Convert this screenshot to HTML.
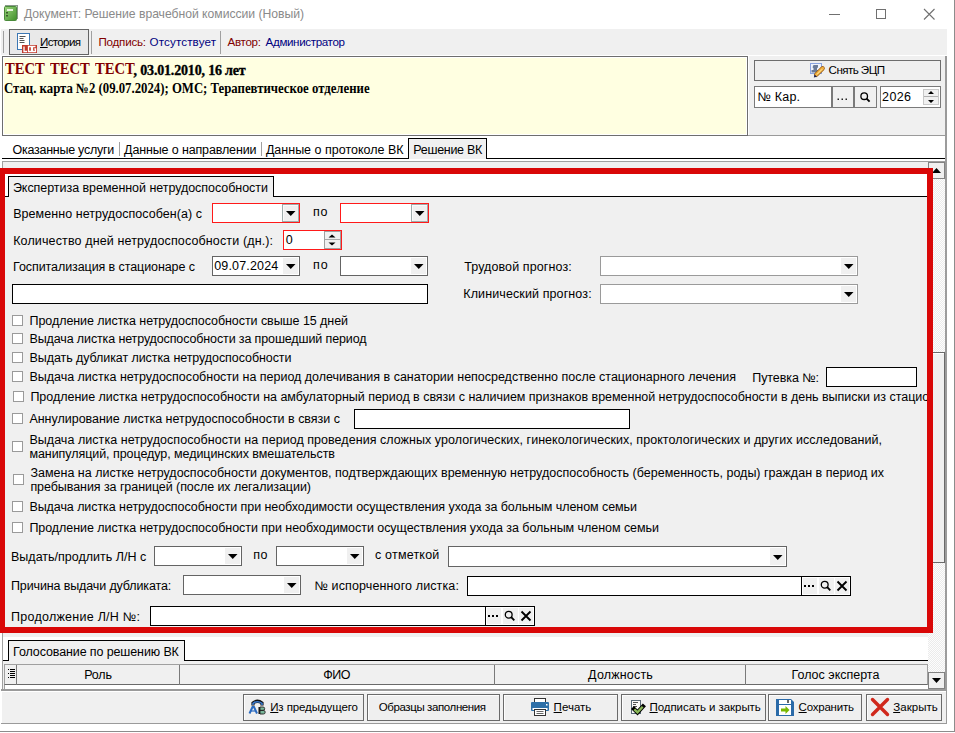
<!DOCTYPE html>
<html><head><meta charset="utf-8"><style>
html,body{margin:0;padding:0;width:955px;height:733px;overflow:hidden;background:#fff;}
.a{position:absolute;box-sizing:border-box;}
.t{white-space:nowrap;line-height:1;font-family:"Liberation Sans",sans-serif;}
u{text-decoration:underline;text-underline-offset:1px;}
</style></head><body>
<div class="a" style="left:0px;top:0px;width:955px;height:733px;background:#ffffff;"></div>
<div class="a" style="left:954px;top:0px;width:1px;height:732px;background:#8c8c8c;"></div>
<div class="a" style="left:0px;top:731px;width:955px;height:1px;background:#8c8c8c;"></div>
<div class="a" style="left:1px;top:29px;width:946px;height:26px;background:#f0f0f0;"></div>
<div class="a" style="left:748px;top:56px;width:199px;height:80px;background:#f0f0f0;"></div>
<div class="a" style="left:2px;top:161px;width:945px;height:563px;background:#f0f0f0;"></div>
<svg class="a" style="left:3px;top:4px" width="16" height="18" viewBox="0 0 16 18"><defs><linearGradient id="gb" x1="0" y1="0" x2="1" y2="1"><stop offset="0" stop-color="#9ed67e"/><stop offset="1" stop-color="#3f8f2a"/></linearGradient></defs><rect x="2.5" y="1.5" width="12" height="13" fill="#e8ece8" stroke="#8a9a8a"/><rect x="1.5" y="2.5" width="12" height="14" rx="1" fill="url(#gb)" stroke="#4a8a3a"/><rect x="4" y="5" width="6" height="2" fill="#e8f6e0"/><rect x="3" y="8" width="2" height="1.5" fill="#3a5a2a"/><rect x="3" y="11" width="2" height="1.5" fill="#3a5a2a"/></svg>
<div class="a t" style="left:24px;top:8px;font-size:12.2px;color:#8a8a8a;font-weight:normal;font-family:'Liberation Sans', sans-serif;letter-spacing:-0.029px;">Документ: Решение врачебной комиссии (Новый)</div>
<div class="a" style="left:829px;top:14px;width:11px;height:1px;background:#707070;"></div>
<div class="a" style="left:876px;top:9px;width:10px;height:10px;box-shadow:inset 0 0 0 1px #707070;"></div>
<svg class="a" style="left:923px;top:8px" width="13" height="13" viewBox="0 0 13 13"><path d="M1 1 L11.5 11.5 M11.5 1 L1 11.5" stroke="#707070" stroke-width="1.1"/></svg>
<div class="a" style="left:3px;top:31px;width:1px;height:22px;background:#a0a0a0;"></div>
<div class="a" style="left:9px;top:29px;width:80px;height:26px;background:#e9e9e9;box-shadow:inset 0 0 0 1px #646464;"></div>
<svg class="a" style="left:16px;top:32px" width="22" height="22" viewBox="0 0 22 22"><rect x="1.5" y="1.5" width="12" height="16" fill="#fff" stroke="#3c78b4"/><path d="M3.5 4.5h6M3.5 6.5h4M3.5 8.5h5M3.5 10.5h5" stroke="#555" stroke-width="1"/><rect x="6" y="13" width="15" height="8" fill="#c0392b"/><path d="M8 14.5v5h3M12.5 14.5h3v5h-3zM19.5 14.5h-3v5h3v-2.5h-1.2" fill="none" stroke="#fff" stroke-width="1.3"/></svg>
<div class="a t" style="left:40px;top:36px;font-size:11.6px;color:#000;font-weight:normal;font-family:'Liberation Sans', sans-serif;letter-spacing:-0.664px;"><u>И</u>стория</div>
<div class="a" style="left:91px;top:31px;width:1px;height:23px;background:#a0a0a0;"></div>
<div class="a t" style="left:98.5px;top:36px;font-size:11.6px;color:#800000;font-weight:normal;font-family:'Liberation Sans', sans-serif;letter-spacing:-0.230px;">Подпись:</div>
<div class="a t" style="left:149.5px;top:36px;font-size:11.6px;color:#000080;font-weight:normal;font-family:'Liberation Sans', sans-serif;letter-spacing:0.147px;">Отсутствует</div>
<div class="a" style="left:220px;top:31px;width:1px;height:23px;background:#a0a0a0;"></div>
<div class="a t" style="left:227.5px;top:36px;font-size:11.6px;color:#800000;font-weight:normal;font-family:'Liberation Sans', sans-serif;letter-spacing:-0.287px;">Автор:</div>
<div class="a t" style="left:265.6px;top:36px;font-size:11.6px;color:#000080;font-weight:normal;font-family:'Liberation Sans', sans-serif;letter-spacing:-0.355px;">Администратор</div>
<div class="a" style="left:2px;top:56px;width:746px;height:80px;background:#ffffe1;box-shadow:inset 0 0 0 1px #6e6e6e;box-shadow:inset 0 0 0 1px #6e6e6e, inset 0 0 0 2px #ffffff;"></div>
<div class="a t" style="left:5px;top:61px;font-size:16px;color:#800000;font-weight:bold;font-family:'Liberation Serif', serif;letter-spacing:0.000px;transform:scaleX(0.915);transform-origin:0 0;">ТЕСТ</div>
<div class="a t" style="left:49.9px;top:61px;font-size:16px;color:#800000;font-weight:bold;font-family:'Liberation Serif', serif;letter-spacing:0.000px;transform:scaleX(0.915);transform-origin:0 0;">ТЕСТ</div>
<div class="a t" style="left:94.6px;top:61px;font-size:16px;color:#800000;font-weight:bold;font-family:'Liberation Serif', serif;letter-spacing:0.000px;transform:scaleX(0.915);transform-origin:0 0;">ТЕСТ</div>
<div class="a t" style="left:133.6px;top:64px;font-size:14px;color:#000;font-weight:bold;font-family:'Liberation Serif', serif;letter-spacing:-0.176px;-webkit-text-stroke:0.35px #000;">, 03.01.2010, 16 лет</div>
<div class="a t" style="left:4px;top:82px;font-size:14px;color:#000;font-weight:bold;font-family:'Liberation Serif', serif;letter-spacing:0.000px;transform:scaleX(0.912);transform-origin:0 0;">Стац. карта №2 (09.07.2024); ОМС; Терапевтическое отделение</div>
<div class="a" style="left:748px;top:55px;width:199px;height:1px;background:#ffffff;"></div>
<div class="a" style="left:748px;top:55px;width:1px;height:81px;background:#ffffff;"></div>
<div class="a" style="left:945px;top:56px;width:2px;height:80px;background:#9a9a9a;"></div>
<div class="a" style="left:748px;top:135px;width:199px;height:1px;background:#9a9a9a;"></div>
<div class="a" style="left:754px;top:60px;width:187px;height:21px;background:#efefef;box-shadow:inset 0 0 0 1px #6d6d6d;"></div>
<svg class="a" style="left:808px;top:61px" width="18" height="18" viewBox="0 0 18 18"><rect x="2.5" y="2.5" width="11" height="10" fill="#eef2fb" stroke="#8aa4e0"/><path d="M5.5 4h4.5v2.2l-1 1v1.8h2v2.5h-7.5v-2.5h2v-1.8l-1-1z" fill="#6a7a98"/><path d="M8.2 13.8 L14.6 7.4" stroke="#9a5a10" stroke-width="4.4" stroke-linecap="round"/><path d="M8.2 13.8 L14.6 7.4" stroke="#f0b040" stroke-width="3" stroke-linecap="round"/><path d="M9 13.4 L14.2 8.2" stroke="#fff0b0" stroke-width="0.9"/><path d="M5.8 16.6 L6.6 13.4 L9 15.8z" fill="#1a2050"/></svg>
<div class="a t" style="left:828.6px;top:64px;font-size:11.6px;color:#000;font-weight:normal;font-family:'Liberation Sans', sans-serif;letter-spacing:-0.559px;">Снять ЭЦП</div>
<div class="a" style="left:754px;top:86px;width:78px;height:22px;background:#ffffff;box-shadow:inset 0 0 0 1px #7a7a7a;"></div>
<div class="a t" style="left:757.6px;top:91px;font-size:12.5px;color:#000;font-weight:normal;font-family:'Liberation Sans', sans-serif;letter-spacing:0.171px;">№ Кар.</div>
<div class="a" style="left:832px;top:86px;width:22px;height:22px;background:#f0f0f0;box-shadow:inset 0 0 0 1px #7a7a7a;"></div>
<svg class="a" style="left:836px;top:96px" width="14" height="6" viewBox="0 0 14 6"><rect x="1.5" y="2.5" width="1.5" height="1.5" fill="#222"/><rect x="5.5" y="2.5" width="1.5" height="1.5" fill="#222"/><rect x="9.5" y="2.5" width="1.5" height="1.5" fill="#222"/></svg>
<div class="a" style="left:854px;top:86px;width:23px;height:22px;background:#f0f0f0;box-shadow:inset 0 0 0 1px #7a7a7a;"></div>
<svg class="a" style="left:858px;top:90px" width="14" height="14" viewBox="0 0 14 14"><circle cx="6.2" cy="6.2" r="3.3" fill="none" stroke="#000" stroke-width="1.3"/><path d="M8.6 8.6 L11.6 11.6" stroke="#000" stroke-width="1.9"/></svg>
<div class="a" style="left:880px;top:86px;width:61px;height:22px;background:#ffffff;box-shadow:inset 0 0 0 1px #7a7a7a;"></div>
<div class="a t" style="left:882.1px;top:91px;font-size:12.5px;color:#000;font-weight:normal;font-family:'Liberation Sans', sans-serif;letter-spacing:0.362px;">2026</div>
<div class="a" style="left:923px;top:89px;width:16px;height:16px;background:#f0f0f0;box-shadow:inset 0 0 0 1px #c8c8c8;"></div>
<div class="a" style="left:924px;top:96px;width:14px;height:1px;background:#b0b0b0;"></div>
<svg class="a" style="left:923px;top:89px" width="16" height="16" viewBox="0 0 16 16"><path d="M5 5 L8 2 L11 5z M5 11 L11 11 L8 14z" fill="#000"/></svg>
<div class="a" style="left:2px;top:158px;width:943px;height:1px;background:#000000;"></div>
<div class="a t" style="left:12.5px;top:144px;font-size:12.5px;color:#000;font-weight:normal;font-family:'Liberation Sans', sans-serif;letter-spacing:-0.262px;">Оказанные услуги</div>
<div class="a" style="left:119px;top:142px;width:1px;height:14px;background:#a0a0a0;"></div>
<div class="a t" style="left:124.1px;top:144px;font-size:12.5px;color:#000;font-weight:normal;font-family:'Liberation Sans', sans-serif;letter-spacing:-0.140px;">Данные о направлении</div>
<div class="a" style="left:261px;top:142px;width:1px;height:14px;background:#a0a0a0;"></div>
<div class="a t" style="left:265.9px;top:144px;font-size:12.5px;color:#000;font-weight:normal;font-family:'Liberation Sans', sans-serif;letter-spacing:0.004px;">Данные о протоколе ВК</div>
<div class="a" style="left:408px;top:138px;width:79px;height:21px;background:#f0f0f0;border:1px solid #000;border-bottom:none;box-sizing:border-box;"></div>
<div class="a t" style="left:413.3px;top:144px;font-size:12.5px;color:#000;font-weight:normal;font-family:'Liberation Sans', sans-serif;letter-spacing:-0.306px;">Решение ВК</div>
<div class="a" style="left:2px;top:161px;width:945px;height:1px;background:#a0a0a0;"></div>
<div class="a" style="left:2px;top:161px;width:1px;height:529px;background:#a0a0a0;"></div>
<div class="a" style="left:1px;top:689px;width:946px;height:2px;background:#9a9a9a;"></div>
<div class="a" style="left:928px;top:162px;width:17px;height:527px;background:#f4f4f4;background-image:repeating-conic-gradient(#ebebeb 0 25%, #fdfdfd 0 50%);background-size:2px 2px;"></div>
<div class="a" style="left:928px;top:162px;width:17px;height:17px;background:#f0f0f0;box-shadow:inset 0 0 0 1px #828282;"></div>
<svg class="a" style="left:928px;top:162px" width="17" height="17" viewBox="0 0 17 17"><path d="M4 11 L8.5 6 L13 11z" fill="#000"/></svg>
<div class="a" style="left:928px;top:352px;width:17px;height:211px;background:#f0f0f0;border:1px solid #6a6a6a;border-left-color:#ffffff;box-shadow:inset 1px 1px 0 #ffffff;"></div>
<div class="a" style="left:928px;top:672px;width:17px;height:17px;background:#f0f0f0;box-shadow:inset 0 0 0 1px #828282;"></div>
<svg class="a" style="left:928px;top:672px" width="17" height="17" viewBox="0 0 17 17"><path d="M4 6 L13 6 L8.5 11z" fill="#000"/></svg>
<div class="a" style="left:945px;top:136px;width:2px;height:554px;background:#9c9c9c;"></div>
<div class="a" style="left:5px;top:174px;width:923px;height:22px;background:#ffffff;"></div>
<div class="a" style="left:5px;top:196px;width:923px;height:1px;background:#000000;"></div>
<div class="a" style="left:8px;top:176px;width:266px;height:21px;background:#f0f0f0;border:1px solid #000;border-bottom:none;box-sizing:border-box;"></div>
<div class="a t" style="left:12.9px;top:182px;font-size:12.5px;color:#000;font-weight:normal;font-family:'Liberation Sans', sans-serif;letter-spacing:-0.044px;">Экспертиза временной нетрудоспособности</div>
<div class="a t" style="left:13.2px;top:208px;font-size:12.5px;color:#000;font-weight:normal;font-family:'Liberation Sans', sans-serif;letter-spacing:0.055px;">Временно нетрудоспособен(а) с</div>
<div class="a" style="left:212px;top:203px;width:88px;height:20px;background:#ffffff;box-shadow:inset 0 0 0 1px #ff1a1a;"></div>
<div class="a" style="left:282px;top:204px;width:17px;height:18px;background:#f0f0f0;border:1px solid #a0acac;box-sizing:border-box;"></div>
<div class="a" style="left:283px;top:205px;width:15px;height:16px;background:#f0f0f0;box-shadow:inset 1px 1px 0 #fafafa;"></div>
<svg class="a" style="left:285px;top:207px" width="12" height="12" viewBox="0 0 12 12"><path d="M1 4 L10.5 4 L5.75 8.9z" fill="#000"/></svg>
<div class="a t" style="left:313.1px;top:206px;font-size:12.5px;color:#000;font-weight:normal;font-family:'Liberation Sans', sans-serif;letter-spacing:0.566px;">по</div>
<div class="a" style="left:340px;top:203px;width:89px;height:20px;background:#ffffff;box-shadow:inset 0 0 0 1px #ff1a1a;"></div>
<div class="a" style="left:411px;top:204px;width:17px;height:18px;background:#f0f0f0;border:1px solid #a0acac;box-sizing:border-box;"></div>
<div class="a" style="left:412px;top:205px;width:15px;height:16px;background:#f0f0f0;box-shadow:inset 1px 1px 0 #fafafa;"></div>
<svg class="a" style="left:414px;top:207px" width="12" height="12" viewBox="0 0 12 12"><path d="M1 4 L10.5 4 L5.75 8.9z" fill="#000"/></svg>
<div class="a t" style="left:13.2px;top:235px;font-size:12.5px;color:#000;font-weight:normal;font-family:'Liberation Sans', sans-serif;letter-spacing:0.135px;">Количество дней нетрудоспособности (дн.):</div>
<div class="a" style="left:283px;top:230px;width:59px;height:20px;background:#ffffff;box-shadow:inset 0 0 0 1px #ff1a1a;"></div>
<div class="a t" style="left:285.8px;top:234px;font-size:12.5px;color:#000;font-weight:normal;font-family:'Liberation Sans', sans-serif;letter-spacing:0.247px;">0</div>
<div class="a" style="left:324px;top:231px;width:17px;height:18px;background:#f0f0f0;border:1px solid #a0a0a0;box-sizing:border-box;"></div>
<div class="a" style="left:325px;top:239px;width:15px;height:1px;background:#a8a8a8;"></div>
<svg class="a" style="left:324px;top:231px" width="18" height="18" viewBox="0 0 18 18"><path d="M4.5 6.5 L8 3.5 L11.5 6.5z M4.5 11.5 L11.5 11.5 L8 14.5z" fill="#000"/></svg>
<div class="a t" style="left:13.1px;top:261px;font-size:12.5px;color:#000;font-weight:normal;font-family:'Liberation Sans', sans-serif;letter-spacing:-0.084px;">Госпитализация в стационаре с</div>
<div class="a" style="left:212px;top:256px;width:88px;height:20px;background:#ffffff;box-shadow:inset 0 0 0 1px #646464;"></div>
<div class="a" style="left:283px;top:258px;width:15px;height:16px;background:#f0f0f0;"></div>
<svg class="a" style="left:285px;top:260px" width="12" height="12" viewBox="0 0 12 12"><path d="M1 4 L10.5 4 L5.75 8.9z" fill="#000"/></svg>
<div class="a t" style="left:214.2px;top:260px;font-size:12.5px;color:#000;font-weight:normal;font-family:'Liberation Sans', sans-serif;letter-spacing:0.171px;">09.07.2024</div>
<div class="a t" style="left:312.9px;top:259px;font-size:12.5px;color:#000;font-weight:normal;font-family:'Liberation Sans', sans-serif;letter-spacing:0.966px;">по</div>
<div class="a" style="left:340px;top:256px;width:88px;height:20px;background:#ffffff;box-shadow:inset 0 0 0 1px #646464;"></div>
<div class="a" style="left:411px;top:258px;width:15px;height:16px;background:#f0f0f0;"></div>
<svg class="a" style="left:413px;top:260px" width="12" height="12" viewBox="0 0 12 12"><path d="M1 4 L10.5 4 L5.75 8.9z" fill="#000"/></svg>
<div class="a t" style="left:464.2px;top:261px;font-size:12.5px;color:#000;font-weight:normal;font-family:'Liberation Sans', sans-serif;letter-spacing:0.101px;">Трудовой прогноз:</div>
<div class="a" style="left:600px;top:256px;width:258px;height:20px;background:#ffffff;box-shadow:inset 0 0 0 1px #9a9a9a;"></div>
<div class="a" style="left:841px;top:258px;width:15px;height:16px;background:#f0f0f0;"></div>
<svg class="a" style="left:843px;top:260px" width="12" height="12" viewBox="0 0 12 12"><path d="M1 4 L10.5 4 L5.75 8.9z" fill="#000"/></svg>
<div class="a" style="left:12px;top:284px;width:416px;height:20px;background:#ffffff;box-shadow:inset 0 0 0 1px #000000;"></div>
<div class="a t" style="left:463.3px;top:288px;font-size:12.5px;color:#000;font-weight:normal;font-family:'Liberation Sans', sans-serif;letter-spacing:0.110px;">Клинический прогноз:</div>
<div class="a" style="left:600px;top:284px;width:258px;height:20px;background:#ffffff;box-shadow:inset 0 0 0 1px #9a9a9a;"></div>
<div class="a" style="left:841px;top:286px;width:15px;height:16px;background:#f0f0f0;"></div>
<svg class="a" style="left:843px;top:288px" width="12" height="12" viewBox="0 0 12 12"><path d="M1 4 L10.5 4 L5.75 8.9z" fill="#000"/></svg>
<div class="a" style="left:12px;top:315px;width:11px;height:11px;background:#ffffff;box-shadow:inset 0 0 0 1px #9a9a9a;"></div>
<div class="a t" style="left:29.5px;top:315px;font-size:12.5px;color:#000;font-weight:normal;font-family:'Liberation Sans', sans-serif;letter-spacing:-0.063px;">Продление листка нетрудоспособности свыше 15 дней</div>
<div class="a" style="left:12px;top:333px;width:11px;height:11px;background:#ffffff;box-shadow:inset 0 0 0 1px #9a9a9a;"></div>
<div class="a t" style="left:29.5px;top:333px;font-size:12.5px;color:#000;font-weight:normal;font-family:'Liberation Sans', sans-serif;letter-spacing:-0.125px;">Выдача листка нетрудоспособности за прошедший период</div>
<div class="a" style="left:12px;top:352px;width:11px;height:11px;background:#ffffff;box-shadow:inset 0 0 0 1px #9a9a9a;"></div>
<div class="a t" style="left:29.5px;top:352px;font-size:12.5px;color:#000;font-weight:normal;font-family:'Liberation Sans', sans-serif;letter-spacing:-0.074px;">Выдать дубликат листка нетрудоспособности</div>
<div class="a" style="left:12px;top:371px;width:11px;height:11px;background:#ffffff;box-shadow:inset 0 0 0 1px #9a9a9a;"></div>
<div class="a t" style="left:29.4px;top:371px;font-size:12.5px;color:#000;font-weight:normal;font-family:'Liberation Sans', sans-serif;letter-spacing:-0.011px;">Выдача листка нетрудоспособности на период долечивания в санатории непосредственно после стационарного лечения</div>
<div class="a" style="left:13px;top:391px;width:11px;height:11px;background:#ffffff;box-shadow:inset 0 0 0 1px #9a9a9a;"></div>
<div class="a t" style="left:30.4px;top:391px;font-size:12.5px;color:#000;font-weight:normal;font-family:'Liberation Sans', sans-serif;letter-spacing:-0.025px;width:896.6px;overflow:hidden;">Продление листка нетрудоспособности на амбулаторный период в связи с наличием признаков временной нетрудоспособности в день выписки из стационара</div>
<div class="a" style="left:12px;top:413px;width:11px;height:11px;background:#ffffff;box-shadow:inset 0 0 0 1px #9a9a9a;"></div>
<div class="a t" style="left:29.4px;top:413px;font-size:12.5px;color:#000;font-weight:normal;font-family:'Liberation Sans', sans-serif;letter-spacing:-0.016px;">Аннулирование листка нетрудоспособности в связи с</div>
<div class="a" style="left:12px;top:441px;width:11px;height:11px;background:#ffffff;box-shadow:inset 0 0 0 1px #9a9a9a;"></div>
<div class="a t" style="left:29.4px;top:434px;font-size:12.5px;color:#000;font-weight:normal;font-family:'Liberation Sans', sans-serif;letter-spacing:0.046px;">Выдача листка нетрудоспособности на период проведения сложных урологических, гинекологических, проктологических и других исследований,</div>
<div class="a t" style="left:29.4px;top:448px;font-size:12.5px;color:#000;font-weight:normal;font-family:'Liberation Sans', sans-serif;letter-spacing:-0.059px;">манипуляций, процедур, медицинских вмешательств</div>
<div class="a" style="left:13px;top:474px;width:11px;height:11px;background:#ffffff;box-shadow:inset 0 0 0 1px #9a9a9a;"></div>
<div class="a t" style="left:30.4px;top:467px;font-size:12.5px;color:#000;font-weight:normal;font-family:'Liberation Sans', sans-serif;letter-spacing:0.007px;">Замена на листке нетрудоспособности документов, подтверждающих временную нетрудоспособность (беременность, роды) граждан в период их</div>
<div class="a t" style="left:30.4px;top:481px;font-size:12.5px;color:#000;font-weight:normal;font-family:'Liberation Sans', sans-serif;letter-spacing:-0.066px;">пребывания за границей (после их легализации)</div>
<div class="a" style="left:12px;top:501px;width:11px;height:11px;background:#ffffff;box-shadow:inset 0 0 0 1px #9a9a9a;"></div>
<div class="a t" style="left:29.4px;top:501px;font-size:12.5px;color:#000;font-weight:normal;font-family:'Liberation Sans', sans-serif;letter-spacing:-0.068px;">Выдача листка нетрудоспособности при необходимости осуществления ухода за больным членом семьи</div>
<div class="a" style="left:12px;top:522px;width:11px;height:11px;background:#ffffff;box-shadow:inset 0 0 0 1px #9a9a9a;"></div>
<div class="a t" style="left:29.4px;top:522px;font-size:12.5px;color:#000;font-weight:normal;font-family:'Liberation Sans', sans-serif;letter-spacing:-0.048px;">Продление листка нетрудоспособности при необходимости осуществления ухода за больным членом семьи</div>
<div class="a t" style="left:752.3px;top:372px;font-size:12.5px;color:#000;font-weight:normal;font-family:'Liberation Sans', sans-serif;letter-spacing:-0.085px;">Путевка №:</div>
<div class="a" style="left:826px;top:367px;width:91px;height:20px;background:#ffffff;box-shadow:inset 0 0 0 1px #000000;"></div>
<div class="a" style="left:354px;top:409px;width:276px;height:20px;background:#ffffff;box-shadow:inset 0 0 0 1px #000000;"></div>
<div class="a t" style="left:11px;top:551px;font-size:12.5px;color:#000;font-weight:normal;font-family:'Liberation Sans', sans-serif;letter-spacing:0.010px;">Выдать/продлить Л/Н с</div>
<div class="a" style="left:154px;top:546px;width:88px;height:20px;background:#ffffff;box-shadow:inset 0 0 0 1px #646464;"></div>
<div class="a" style="left:225px;top:548px;width:15px;height:16px;background:#f0f0f0;"></div>
<svg class="a" style="left:227px;top:550px" width="12" height="12" viewBox="0 0 12 12"><path d="M1 4 L10.5 4 L5.75 8.9z" fill="#000"/></svg>
<div class="a t" style="left:253.2px;top:549px;font-size:12.5px;color:#000;font-weight:normal;font-family:'Liberation Sans', sans-serif;letter-spacing:0.466px;">по</div>
<div class="a" style="left:276px;top:546px;width:88px;height:20px;background:#ffffff;box-shadow:inset 0 0 0 1px #646464;"></div>
<div class="a" style="left:347px;top:548px;width:15px;height:16px;background:#f0f0f0;"></div>
<svg class="a" style="left:349px;top:550px" width="12" height="12" viewBox="0 0 12 12"><path d="M1 4 L10.5 4 L5.75 8.9z" fill="#000"/></svg>
<div class="a t" style="left:375px;top:549px;font-size:12.5px;color:#000;font-weight:normal;font-family:'Liberation Sans', sans-serif;letter-spacing:0.197px;">с отметкой</div>
<div class="a" style="left:448px;top:546px;width:339px;height:21px;background:#ffffff;box-shadow:inset 0 0 0 1px #646464;"></div>
<div class="a" style="left:770px;top:548px;width:15px;height:17px;background:#f0f0f0;"></div>
<svg class="a" style="left:772px;top:551px" width="12" height="12" viewBox="0 0 12 12"><path d="M1 4 L10.5 4 L5.75 8.9z" fill="#000"/></svg>
<div class="a t" style="left:11px;top:580px;font-size:12.5px;color:#000;font-weight:normal;font-family:'Liberation Sans', sans-serif;letter-spacing:-0.125px;">Причина выдачи дубликата:</div>
<div class="a" style="left:183px;top:575px;width:118px;height:20px;background:#ffffff;box-shadow:inset 0 0 0 1px #646464;"></div>
<div class="a" style="left:284px;top:577px;width:15px;height:16px;background:#f0f0f0;"></div>
<svg class="a" style="left:286px;top:579px" width="12" height="12" viewBox="0 0 12 12"><path d="M1 4 L10.5 4 L5.75 8.9z" fill="#000"/></svg>
<div class="a t" style="left:314.4px;top:580px;font-size:12.5px;color:#000;font-weight:normal;font-family:'Liberation Sans', sans-serif;letter-spacing:0.125px;">№ испорченного листка:</div>
<div class="a" style="left:467px;top:576px;width:384px;height:20px;background:#ffffff;box-shadow:inset 0 0 0 1px #000000;"></div>
<div class="a" style="left:801px;top:576px;width:1px;height:20px;background:#000000;"></div>
<div class="a" style="left:803px;top:578px;width:14px;height:16px;background:#f0f0f0;"></div>
<div class="a" style="left:819px;top:578px;width:15px;height:16px;background:#f0f0f0;"></div>
<div class="a" style="left:835px;top:578px;width:14px;height:16px;background:#f0f0f0;"></div>
<svg class="a" style="left:803px;top:583px" width="13" height="5" viewBox="0 0 13 5"><rect x="1" y="2" width="2" height="2" fill="#000"/><rect x="5" y="2" width="2" height="2" fill="#000"/><rect x="9" y="2" width="2" height="2" fill="#000"/></svg>
<svg class="a" style="left:819px;top:579px" width="14" height="14" viewBox="0 0 14 14"><circle cx="5.7" cy="5.7" r="3.4" fill="none" stroke="#000" stroke-width="1.3"/><path d="M8.2 8.2 L11.3 11.3" stroke="#000" stroke-width="1.9"/></svg>
<svg class="a" style="left:835px;top:579px" width="14" height="14" viewBox="0 0 14 14"><path d="M2.5 2.5 L11.5 11.5 M11.5 2.5 L2.5 11.5" stroke="#000" stroke-width="1.9"/></svg>
<div class="a t" style="left:11px;top:611px;font-size:12.5px;color:#000;font-weight:normal;font-family:'Liberation Sans', sans-serif;letter-spacing:0.261px;">Продолжение Л/Н №:</div>
<div class="a" style="left:150px;top:606px;width:385px;height:20px;background:#ffffff;box-shadow:inset 0 0 0 1px #000000;"></div>
<div class="a" style="left:485px;top:606px;width:1px;height:20px;background:#000000;"></div>
<div class="a" style="left:487px;top:608px;width:14px;height:16px;background:#f0f0f0;"></div>
<div class="a" style="left:503px;top:608px;width:15px;height:16px;background:#f0f0f0;"></div>
<div class="a" style="left:519px;top:608px;width:14px;height:16px;background:#f0f0f0;"></div>
<svg class="a" style="left:487px;top:613px" width="13" height="5" viewBox="0 0 13 5"><rect x="1" y="2" width="2" height="2" fill="#000"/><rect x="5" y="2" width="2" height="2" fill="#000"/><rect x="9" y="2" width="2" height="2" fill="#000"/></svg>
<svg class="a" style="left:503px;top:609px" width="14" height="14" viewBox="0 0 14 14"><circle cx="5.7" cy="5.7" r="3.4" fill="none" stroke="#000" stroke-width="1.3"/><path d="M8.2 8.2 L11.3 11.3" stroke="#000" stroke-width="1.9"/></svg>
<svg class="a" style="left:519px;top:609px" width="14" height="14" viewBox="0 0 14 14"><path d="M2.5 2.5 L11.5 11.5 M11.5 2.5 L2.5 11.5" stroke="#000" stroke-width="1.9"/></svg>
<div class="a" style="left:0px;top:168px;width:933px;height:6px;background:#d90707;"></div>
<div class="a" style="left:0px;top:627px;width:933px;height:6px;background:#d90707;"></div>
<div class="a" style="left:0px;top:168px;width:5px;height:465px;background:#d90707;"></div>
<div class="a" style="left:927px;top:168px;width:6px;height:465px;background:#d90707;"></div>
<div class="a" style="left:3px;top:637px;width:925px;height:23px;background:#ffffff;"></div>
<div class="a" style="left:3px;top:660px;width:925px;height:1px;background:#000000;"></div>
<div class="a" style="left:8px;top:640px;width:177px;height:21px;background:#f0f0f0;border:1px solid #000;border-bottom:none;box-sizing:border-box;"></div>
<div class="a t" style="left:13.1px;top:646px;font-size:12.5px;color:#000;font-weight:normal;font-family:'Liberation Sans', sans-serif;letter-spacing:-0.114px;">Голосование по решению ВК</div>
<div class="a" style="left:4px;top:664px;width:924px;height:25px;background:#ffffff;"></div>
<div class="a" style="left:4px;top:664px;width:924px;height:21px;background:#f0f0f0;border:1px solid #a0a0a0;border-bottom:1px solid #6a6a6a;box-sizing:border-box;"></div>
<div class="a" style="left:4px;top:685px;width:1px;height:4px;background:#a0a0a0;"></div>
<div class="a" style="left:16px;top:665px;width:1px;height:20px;background:#7a7a7a;"></div>
<div class="a" style="left:179px;top:665px;width:1px;height:20px;background:#7a7a7a;"></div>
<div class="a" style="left:494px;top:665px;width:1px;height:20px;background:#7a7a7a;"></div>
<div class="a" style="left:745px;top:665px;width:1px;height:20px;background:#7a7a7a;"></div>
<svg class="a" style="left:7px;top:668px" width="9" height="12" viewBox="0 0 9 12"><path d="M1 1.5h1M3 1.5h5M3 3.5h5M1 5.5h1M3 5.5h5M3 7.5h5M1 9.5h1M3 9.5h5" stroke="#000" stroke-width="1"/></svg>
<div class="a t" style="left:84.2px;top:669px;font-size:12.5px;color:#000;font-weight:normal;font-family:'Liberation Sans', sans-serif;letter-spacing:-0.160px;">Роль</div>
<div class="a t" style="left:323.2px;top:669px;font-size:12.5px;color:#000;font-weight:normal;font-family:'Liberation Sans', sans-serif;letter-spacing:-0.459px;">ФИО</div>
<div class="a t" style="left:588.1px;top:669px;font-size:12.5px;color:#000;font-weight:normal;font-family:'Liberation Sans', sans-serif;letter-spacing:0.177px;">Должность</div>
<div class="a t" style="left:791.6px;top:669px;font-size:12.5px;color:#000;font-weight:normal;font-family:'Liberation Sans', sans-serif;letter-spacing:-0.007px;">Голос эксперта</div>
<div class="a" style="left:2px;top:690px;width:945px;height:1px;background:#9a9a9a;"></div>
<div class="a" style="left:2px;top:691px;width:945px;height:1px;background:#ffffff;"></div>
<div class="a" style="left:1px;top:723px;width:946px;height:1px;background:#9a9a9a;"></div>
<div class="a" style="left:946px;top:690px;width:1px;height:34px;background:#9a9a9a;"></div>
<div class="a" style="left:243px;top:694px;width:121px;height:27px;background:#efefef;box-shadow:inset 0 0 0 1px #6a6a6a;"></div>
<div class="a" style="left:244px;top:695px;width:119px;height:25px;box-shadow:inset 1px 1px 0 #fdfdfd;"></div>
<svg class="a" style="left:244px;top:695px" width="26" height="26" viewBox="0 0 26 26"><path d="M9 10.5 V8 Q13.5 4.5 18 8 V10.5" fill="none" stroke="#111" stroke-width="3.2"/><path d="M9 10 V8.3 Q13.5 5.2 18 8.3 V10" fill="none" stroke="#3a7ad0" stroke-width="1.6"/><path d="M5.5 18.5 L8.5 12 L10 12 L13 18.5" fill="none" stroke="#2a6ac0" stroke-width="2"/><path d="M7 16h4" stroke="#2a6ac0" stroke-width="1.2"/><rect x="14.5" y="12" width="1.5" height="7" fill="#111"/><path d="M16 12h3a1.6 1.6 0 0 1 0 3.4h-3zM16 15.4h3.4a1.8 1.8 0 0 1 0 3.6H16z" fill="#7ab89a" stroke="#222" stroke-width="0.9"/></svg>
<div class="a t" style="left:270.2px;top:702px;font-size:11.5px;color:#000;font-weight:normal;font-family:'Liberation Sans', sans-serif;letter-spacing:-0.094px;"><u>И</u>з предыдущего</div>
<div class="a" style="left:367px;top:694px;width:133px;height:27px;background:#efefef;box-shadow:inset 0 0 0 1px #6a6a6a;"></div>
<div class="a" style="left:368px;top:695px;width:131px;height:25px;box-shadow:inset 1px 1px 0 #fdfdfd;"></div>
<div class="a t" style="left:378.7px;top:702px;font-size:11.5px;color:#000;font-weight:normal;font-family:'Liberation Sans', sans-serif;letter-spacing:-0.389px;">Образцы заполнения</div>
<div class="a" style="left:503px;top:694px;width:115px;height:27px;background:#efefef;box-shadow:inset 0 0 0 1px #6a6a6a;"></div>
<div class="a" style="left:504px;top:695px;width:113px;height:25px;box-shadow:inset 1px 1px 0 #fdfdfd;"></div>
<svg class="a" style="left:527px;top:695px" width="26" height="26" viewBox="0 0 26 26"><rect x="7.5" y="3.5" width="11" height="6" fill="#fff" stroke="#333"/><rect x="4" y="7" width="18" height="9" rx="1" fill="#2e6fa7"/><rect x="5.5" y="13" width="15" height="2" fill="#fff"/><rect x="7.5" y="14.5" width="11" height="6" fill="#fff" stroke="#333"/><path d="M9.5 16.5h7M9.5 18.5h7" stroke="#666"/><rect x="19" y="9" width="1.5" height="1.5" fill="#fff"/></svg>
<div class="a t" style="left:553.6px;top:702px;font-size:11.5px;color:#000;font-weight:normal;font-family:'Liberation Sans', sans-serif;letter-spacing:0.002px;"><u>П</u>ечать</div>
<div class="a" style="left:621px;top:694px;width:145px;height:27px;background:#efefef;box-shadow:inset 0 0 0 1px #6a6a6a;"></div>
<div class="a" style="left:622px;top:695px;width:143px;height:25px;box-shadow:inset 1px 1px 0 #fdfdfd;"></div>
<svg class="a" style="left:624px;top:695px" width="26" height="26" viewBox="0 0 26 26"><rect x="7.5" y="5.5" width="9" height="13" fill="#fafafa" stroke="#5a6a78"/><path d="M9 7.5h5M9 9.5h3M9 11.5h4M9 13.5h2" stroke="#555"/><path d="M10 14 L13.5 17.5 L19 11.5" fill="none" stroke="#000" stroke-width="4.2" stroke-linecap="square"/><path d="M10.3 14.3 L13.5 17.3 L18.7 11.8" fill="none" stroke="#8ab858" stroke-width="2.4"/></svg>
<div class="a t" style="left:649.5px;top:702px;font-size:11.5px;color:#000;font-weight:normal;font-family:'Liberation Sans', sans-serif;letter-spacing:-0.059px;"><u>П</u>одписать и закрыть</div>
<div class="a" style="left:768px;top:694px;width:94px;height:27px;background:#efefef;box-shadow:inset 0 0 0 1px #6a6a6a;"></div>
<div class="a" style="left:769px;top:695px;width:92px;height:25px;box-shadow:inset 1px 1px 0 #fdfdfd;"></div>
<svg class="a" style="left:776px;top:699px" width="18" height="17" viewBox="0 0 18 17"><path d="M0 0H15L18 3V17H0z" fill="#2a6aa8"/><rect x="3" y="1" width="12" height="4" fill="#fff"/><rect x="11" y="1" width="2" height="3" fill="#666"/><rect x="3" y="6" width="12" height="10" fill="#fff"/><path d="M5 9.5H9.5V7L13.5 11L9.5 15V12.5H5z" fill="#78b800"/></svg>
<div class="a t" style="left:798.6px;top:702px;font-size:11.5px;color:#000;font-weight:normal;font-family:'Liberation Sans', sans-serif;letter-spacing:-0.220px;"><u>С</u>охранить</div>
<div class="a" style="left:866px;top:694px;width:76px;height:27px;background:#efefef;box-shadow:inset 0 0 0 1px #6a6a6a;"></div>
<div class="a" style="left:867px;top:695px;width:74px;height:25px;box-shadow:inset 1px 1px 0 #fdfdfd;"></div>
<svg class="a" style="left:867px;top:695px" width="26" height="26" viewBox="0 0 26 26"><path d="M5.5 4.5 L20.5 19.5 M20.5 4.5 L5.5 19.5" stroke="#d0281c" stroke-width="3.4" stroke-linecap="round"/></svg>
<div class="a t" style="left:893.2px;top:702px;font-size:11.5px;color:#000;font-weight:normal;font-family:'Liberation Sans', sans-serif;letter-spacing:0.048px;"><u>З</u>акрыть</div>
</body></html>
